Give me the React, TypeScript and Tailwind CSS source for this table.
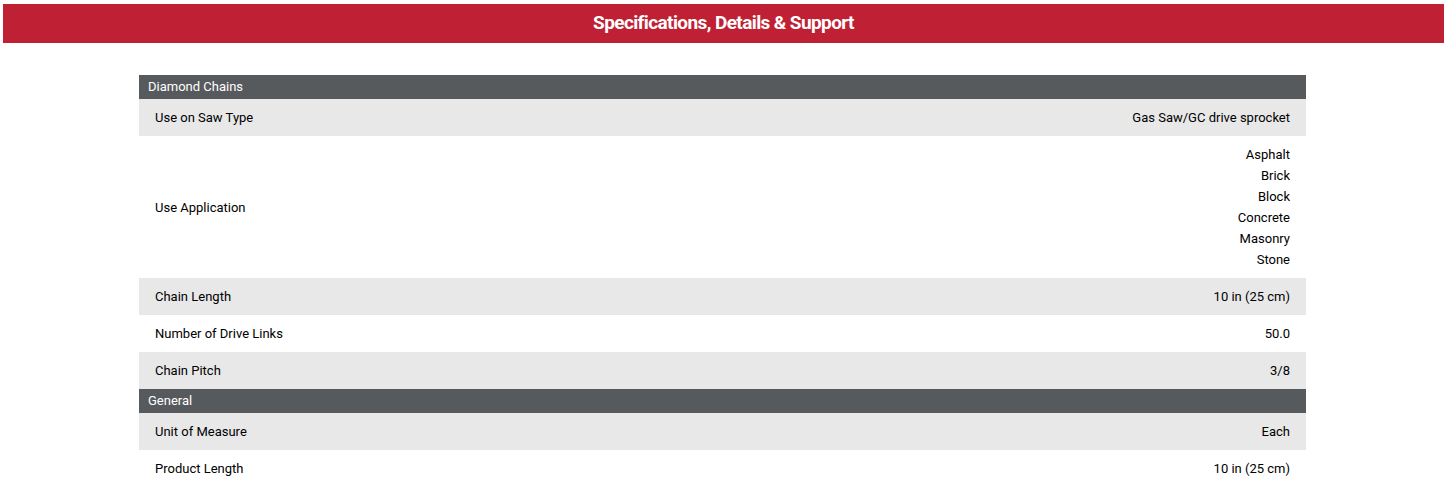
import React from "react";

type Row = { label: string; values: string[] };
type Section = { title: string; rows: Row[] };

const sections: Section[] = [
  {
    title: "Diamond Chains",
    rows: [
      { label: "Use on Saw Type", values: ["Gas Saw/GC drive sprocket"] },
      { label: "Use Application", values: ["Asphalt", "Brick", "Block", "Concrete", "Masonry", "Stone"] },
      { label: "Chain Length", values: ["10 in (25 cm)"] },
      { label: "Number of Drive Links", values: ["50.0"] },
      { label: "Chain Pitch", values: ["3/8"] },
    ],
  },
  {
    title: "General",
    rows: [
      { label: "Unit of Measure", values: ["Each"] },
      { label: "Product Length", values: ["10 in (25 cm)"] },
    ],
  },
];

export default function App() {
  return (
    <div className="bg-white px-[3px] pt-[4px] text-black" style={{ fontFamily: "Roboto, 'Liberation Sans', sans-serif" }}>
      <div className="flex h-[39px] items-center justify-center bg-[#c02033]">
        <h2 className="text-[19px] font-bold tracking-[-0.6px] text-white">Specifications, Details &amp; Support</h2>
      </div>
      <div className="ml-[136px] mt-[32px] w-[1167px]">
        {sections.map((s) => (
          <div key={s.title}>
            <div className="flex h-[24px] items-center bg-[#575a5d] pl-[9px] text-[13px] text-white">{s.title}</div>
            {s.rows.map((r, i) => (
              <div
                key={r.label}
                className={`flex items-center justify-between px-[16px] py-[8px] text-[13px] leading-[21px] ${
                  i % 2 === 0 ? "bg-[#e8e8e8]" : "bg-white"
                }`}
              >
                <div>{r.label}</div>
                <div className="flex flex-col items-end text-right">
                  {r.values.map((v) => (
                    <div key={v}>{v}</div>
                  ))}
                </div>
              </div>
            ))}
          </div>
        ))}
      </div>
    </div>
  );
}
